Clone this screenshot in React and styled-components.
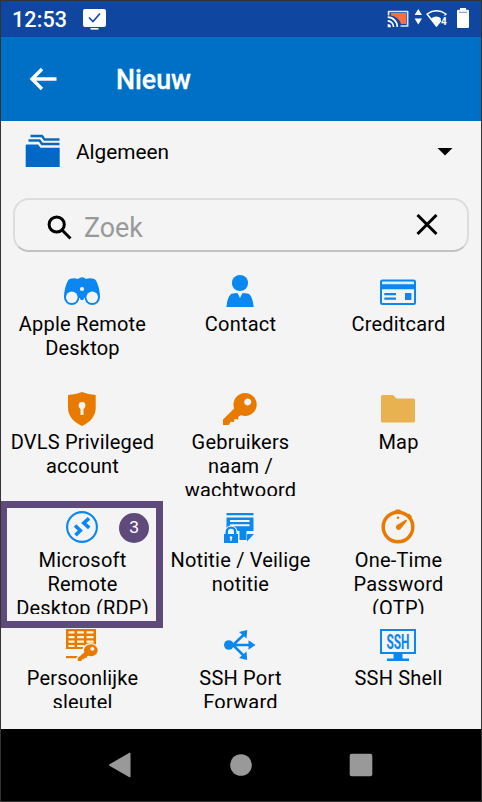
import React from "react";
import styled, { createGlobalStyle } from "styled-components";

const BLUE = "#0a87f0";
const ORANGE = "#e97a00";
const PAPER = "#f4f4f4";

const Global = createGlobalStyle`
  * { box-sizing: border-box; }
  body { margin: 0; background: #333; font-family: Roboto, "Noto Sans", sans-serif; color: #000; }
  svg { display: block; flex: none; }
`;

const Screen = styled.main`
  width: 482px;
  height: 802px;
  border: 1px solid #333;
  background: ${PAPER};
  display: flex;
  flex-direction: column;
  overflow: hidden;
`;

const StatusBar = styled.div`
  height: 36px;
  flex: none;
  padding: 0 11px;
  display: flex;
  align-items: center;
  background: #0f469f;
  color: #fff;
`;

const Clock = styled.time`
  width: 70px;
  font-size: 21.5px;
  font-weight: 500;
  line-height: 36px;
  letter-spacing: 0.1px;
  padding-top: 1px;
`;

const StatusIcons = styled.div`
  display: flex;
  margin-left: auto;
`;

const AppBar = styled.header`
  height: 84px;
  flex: none;
  display: flex;
  align-items: center;
  padding-left: 28px;
  background: #006fc6;
  color: #fff;
`;

const Title = styled.h1`
  margin: 0 0 0 59px;
  font-size: 26.8px;
  font-weight: 500;
  line-height: 32px;
  padding-top: 1px;
  -webkit-text-stroke: 0.3px #fff;
`;

const Category = styled.div`
  height: 77px;
  flex: none;
  display: flex;
  align-items: flex-start;
  padding: 13px 28px 0 24px;
`;

const CategoryName = styled.span`
  margin: 5px auto 0 15px;
  font-size: 20.8px;
  line-height: 26px;
`;

const Arrow = styled.svg`
  margin-top: 13px;
`;

const SearchBox = styled.div`
  height: 54px;
  flex: none;
  margin: 0 12px;
  padding: 0 29px 0 32px;
  display: flex;
  align-items: center;
  border: 2px solid #dcdcdc;
  border-bottom-color: #c2c2c2;
  border-radius: 16px;
`;

const SearchGlyph = styled.svg`
  margin-top: 4px;
`;

const Placeholder = styled.span`
  margin: 5px auto 0 12px;
  font-size: 26.8px;
  line-height: 32px;
  color: #999;
`;

const EntryGrid = styled.section`
  height: 436px;
  flex: none;
  margin: 20px 2px 0;
  display: grid;
  grid-template-columns: repeat(3, 158px);
  grid-auto-rows: 118px;
  overflow: hidden;
`;

const Entry = styled.div`
  display: flex;
  flex-direction: column;
  align-items: center;
`;

const Label = styled.div`
  width: 156px;
  height: 66px;
  overflow: hidden;
  padding-left: 1px;
  text-align: center;
  white-space: pre-line;
  font-size: 20px;
  line-height: 24px;
  letter-spacing: 0.2px;
`;

const GridArea = styled.div`
  position: relative;
`;

const Highlight = styled.div`
  position: absolute;
  left: -1px;
  top: 249px;
  width: 163px;
  height: 127px;
  border: 7px solid #5f4b7b;
`;

const StepBadge = styled.div`
  position: absolute;
  right: 7px;
  top: 5px;
  width: 30px;
  height: 30px;
  border-radius: 50%;
  background: #5f4b7b;
  color: #fff;
  font-family: "Liberation Sans", Arial, sans-serif;
  font-size: 17px;
  line-height: 30px;
  text-align: center;
`;

const NavBar = styled.nav`
  height: 72px;
  flex: none;
  margin-top: auto;
  background: #000;
  display: flex;
  justify-content: center;
  align-items: center;
  gap: 96px;
`;

const Icon = ({ children, color = BLUE }) => (
  <svg width="40" height="40" viewBox="0 0 40 40" fill={color}>
    {children}
  </svg>
);

const Binoculars = () => (
  <Icon>
    <path d="M2 26C2 19 3.500 13 6 8.500C7.500 6 13 5.500 16 7L17.500 6Q20 4.500 22.500 6L24 7C27 5.500 32.500 6 34 8.500C36.500 13 38 19 38 26Z" />
    <circle cx="9.800" cy="25.300" r="7.800" />
    <circle cx="30.200" cy="25.300" r="7.800" />
    <path d="M16.500 29.500L17.500 26h5L23.500 29.500V34h-7z" fill={PAPER} />
    <path d="M18 20h4v4c0 2 0 3-.7 4h-2.600c-.7-1-.7-2-.7-4z" />
    <circle cx="9.800" cy="25.300" r="5.800" fill={PAPER} />
    <circle cx="30.200" cy="25.300" r="5.800" fill={PAPER} />
    <circle cx="20" cy="17" r="2.100" fill={PAPER} />
  </Icon>
);

const Contact = () => (
  <Icon>
    <circle cx="20" cy="11" r="8.100" />
    <path d="M6.500 35C7 29 8 25 10.500 22.500Q12 21 17.500 21L20 26 22.500 21Q28 21 29.700 22.500C32 25 33 29 33.700 35Z" />
  </Icon>
);

const CreditCard = () => (
  <Icon>
    <rect x="3" y="8.500" width="34" height="23.500" rx="1.500" fill="#d5f3ff" stroke={BLUE} strokeWidth="2" />
    <path d="M4 17h32v14H4z" fill={PAPER} />
    <path d="M3 12.300h34v5H3z M6.300 21h11.700v2.200H6.300z M6.300 25.600h11.700v2.200H6.300z M27 21h6.400v7H27z" />
  </Icon>
);

const Shield = () => (
  <Icon color={ORANGE}>
    <path d="M6 5Q14 4.500 20 2Q26 4.500 33.700 5V18C33.700 26 28 32.500 20 36C12 32.500 6 26 6 18Z" />
    <circle cx="20" cy="15.500" r="3.400" fill={PAPER} />
    <path d="M18.500 17h3v8h-3z" fill={PAPER} />
  </Icon>
);

const KeyShape = () => (
  <path
    fillRule="evenodd"
    d="M25.300 3A11.500 11.500 0 1 1 21 25.200L18.600 26.400 18 29.500 14.500 29 14 32 10.500 31.700 9 35H3V29.500L14.200 18.500A11.500 11.500 0 0 1 25.300 3ZM27.700 8.400a3.500 3.500 0 1 0 .01 0Z"
  />
);

const Key = () => (
  <Icon color={ORANGE}>
    <KeyShape />
  </Icon>
);

const Folder = () => (
  <Icon color="#e9b251">
    <path d="M4.500 5H15L18.500 8.500H35.500Q37 8.500 37 10V31Q37 32.500 35.500 32.500H4.500Q3 32.500 3 31V6.500Q3 5 4.500 5Z" />
  </Icon>
);

const RemoteDesktop = () => (
  <Icon>
    <circle cx="20" cy="19" r="14.900" fill="none" stroke={BLUE} strokeWidth="2.100" />
    <path
      d="M13 17.500 18.300 22.500 13.500 27.300 M27 10.300 21.800 15 27.200 19.800"
      fill="none"
      stroke={BLUE}
      strokeWidth="3.600"
    />
  </Icon>
);

const SecureNote = () => (
  <Icon>
    <path d="M6.500 5h27v2.300h-27z M6.500 9.500h27V23h-7v9h-7V23h-2Q16 18 11 18q-3 0-4.500 2z" />
    <path d="M10 12h19.500v2H10z M10 16.300h19.500v2H10z" fill={PAPER} />
    <path d="M27 33.500V27q0-1 1-1h6z" />
    <path d="M3.500 26H5v-2a6 6 0 0 1 12 0v2h1.500v9h-15z" stroke={PAPER} strokeWidth="1" />
    <path d="M8 26v-2.200a3 3 0 0 1 6 0V26z" fill={PAPER} />
    <path d="M4 26h14v9H4z" />
    <circle cx="11" cy="29.500" r="1.300" fill={PAPER} />
    <path d="M10.300 30h1.400v3h-1.400z" fill={PAPER} />
  </Icon>
);

const Timer = () => (
  <Icon color={ORANGE}>
    <circle cx="20" cy="19" r="14.800" fill="none" stroke={ORANGE} strokeWidth="3.500" />
    <path d="M16.500 3.500 18 1.500h4l1.500 2z M29 7l2-1.500 3 3-1.500 2z M28 11.500 29.200 12.700 23 20.500A2.700 2.700 0 1 1 19.200 16.900Z" />
    <circle cx="20" cy="9.800" r="1.300" />
  </Icon>
);

const PrivateKey = () => (
  <Icon color={ORANGE}>
    <path d="M4 3h30v19H4z M4 19h18v4H4z M4 30h12v2.300H4z" />
    <path
      d="M6.500 5.300h6v2.200h-6z M15 5.300h7v2.200h-7z M24.500 5.300h7v2.200h-7z M6.500 10h6v2.200h-6z M15 10h7v2.200h-7z M24.500 10h7v2.200h-7z M6.500 14.500h6v2.200h-6z M15 14.500h7v2.200h-7z M24.500 14.500h7v2.200h-7z M6.500 19h6v2h-6z M15 19h7v2h-7z"
      fill="#fff4dd"
    />
    <g transform="translate(14 16.700) scale(.59 .52)">
      <g stroke={PAPER} strokeWidth="5" strokeLinejoin="round"><KeyShape /></g>
      <KeyShape />
    </g>
  </Icon>
);

const PortForward = () => (
  <Icon>
    <circle cx="8.800" cy="19" r="4.800" />
    <path d="M10 19H30 M13 19 25 7.500 M13 19 25 31" fill="none" stroke={BLUE} strokeWidth="2.500" />
    <path d="M28.500 14.200 35.500 19 28.500 23.800Z M19 6 27.200 4 26.500 12.500Z M19 32 27.200 34 26.500 25.500Z" />
  </Icon>
);

const SshShell = () => (
  <Icon>
    <rect x="3" y="4" width="34" height="23" fill="none" stroke={BLUE} strokeWidth="2" />
    <path d="M15.500 28h9v4.500H31V35H9v-2.500h6.500z" />
    <text
      x="8.500"
      y="23"
      fontFamily="Roboto, sans-serif"
      fontSize="21"
      fontWeight="700"
      textLength="23"
      lengthAdjust="spacingAndGlyphs"
    >
      SSH
    </text>
  </Icon>
);

const entries = [
  { label: "Apple Remote\nDesktop", Glyph: Binoculars },
  { label: "Contact", Glyph: Contact },
  { label: "Creditcard", Glyph: CreditCard },
  { label: "DVLS Privileged\naccount", Glyph: Shield },
  { label: "Gebruikers\nnaam /\nwachtwoord", Glyph: Key },
  { label: "Map", Glyph: Folder },
  { label: "Microsoft\nRemote\nDesktop (RDP)", Glyph: RemoteDesktop },
  { label: "Notitie / Veilige\nnotitie", Glyph: SecureNote },
  { label: "One-Time\nPassword\n(OTP)", Glyph: Timer },
  { label: "Persoonlijke\nsleutel", Glyph: PrivateKey },
  { label: "SSH Port\nForward", Glyph: PortForward },
  { label: "SSH Shell", Glyph: SshShell },
];

const MonitorCheck = () => (
  <svg width="25" height="22" viewBox="0 0 25 22">
    <rect x="1" y="1" width="23" height="18" rx="2" fill="#fff" />
    <path d="M7 9.500 11 13.500 18 5.500" fill="none" stroke="#0f469f" strokeWidth="1.600" />
    <path d="M8.500 20h8v1.600h-8z" fill="#fff" />
  </svg>
);

const SystemIcons = () => (
  <svg width="84" height="24" viewBox="386 7 84 24">
    <path d="M391 13h15v11h-5Q399 17 391 15.500z" fill="#fb6d42" />
    <path d="M388.600 15.500V11.500H407.600V26H400.500" fill="none" stroke="#dfe8f8" strokeWidth="1.700" strokeLinejoin="round" />
    <path d="M387.700 17.200A9.600 9.600 0 0 1 397.300 27 M387.700 20.900A6 6 0 0 1 393.600 27" fill="none" stroke="#fff" strokeWidth="1.700" />
    <path d="M387.700 24a3.200 3.200 0 0 1 3.200 3.200h-3.200z" fill="#fff" />
    <path d="M418.300 9 422 15h-7.400z M418.300 24.500 422 18.500h-7.400z" fill="#fff" />
    <path d="M427 14Q436.500 7.500 446 14L436.500 26z" fill="none" stroke="#fff" strokeWidth="1.500" strokeLinejoin="round" />
    <path d="M431 18.500Q436.500 14.500 441 18.500L436.500 27z" fill="#fff" />
    <path d="M441 15.500h7v10h-7z" fill="#0f469f" />
    <text x="441" y="24.700" fontFamily="Roboto, sans-serif" fontWeight="700" fontSize="10" fill="#fff">4</text>
    <path d="M460 8h6v1.800h2.200Q469 9.800 469 11V27Q469 28 468 28H458Q457 28 457 27V11Q457 9.800 458 9.800H460z" fill="#fff" />
    <path d="M459 12.300h8" stroke="#6d8fc6" strokeWidth="1" />
  </svg>
);

export default function App() {
  return (
    <>
      <Global />
      <Screen>
        <StatusBar>
          <Clock>12:53</Clock>
          <MonitorCheck />
          <StatusIcons>
            <SystemIcons />
          </StatusIcons>
        </StatusBar>
        <AppBar>
          <svg width="28" height="24" viewBox="0 0 28 24" fill="none" stroke="#fff" strokeWidth="3.400">
            <path d="M13 2 3 12 13 22M3 12H27.500" />
          </svg>
          <Title>Nieuw</Title>
        </AppBar>
        <Category>
          <svg width="36" height="34" viewBox="0 0 36 34">
            <path d="M5.500 2H17L19.500 5.500H34.500 M3.500 6.500H14.500L17 10H34.500" fill="none" stroke="#0d69b8" strokeWidth="2.300" />
            <path d="M1.700 10.500H13L15.500 13.800H34.700V33H.7V11.500Q.7 10.500 1.700 10.500Z" fill="#0068c6" />
          </svg>
          <CategoryName>Algemeen</CategoryName>
          <Arrow width="16" height="9" viewBox="0 0 16 9">
            <path d="M.5 1H15.500L8 8.500Z" />
          </Arrow>
        </Category>
        <SearchBox>
          <SearchGlyph width="25" height="25" viewBox="0 0 25 25" fill="none" stroke="#000" strokeWidth="3">
            <circle cx="9.700" cy="9.500" r="7.600" />
            <path d="M15 15 23.500 23.500" />
          </SearchGlyph>
          <Placeholder>Zoek</Placeholder>
          <svg width="22" height="22" viewBox="0 0 22 22" fill="none" stroke="#000" strokeWidth="3">
            <path d="M1.500 1 20.500 20M20.500 1 1.500 20" />
          </svg>
        </SearchBox>
        <GridArea>
          <EntryGrid>
            {entries.map(({ label, Glyph }) => (
              <Entry key={label}>
                <Glyph />
                <Label>{label}</Label>
              </Entry>
            ))}
          </EntryGrid>
          <Highlight>
            <StepBadge>3</StepBadge>
          </Highlight>
        </GridArea>
        <NavBar>
          <svg width="24" height="26" viewBox="0 0 24 26">
            <path d="M.8 13 20.800 1.500V24.500Z" fill="#999" stroke="#999" strokeWidth="1.500" strokeLinejoin="round" />
          </svg>
          <svg width="24" height="24" viewBox="0 0 24 24">
            <circle cx="12" cy="12" r="10.800" fill="#999" />
          </svg>
          <svg width="24" height="24" viewBox="0 0 24 24">
            <rect x=".7" y=".7" width="22.600" height="22.600" rx="2" fill="#999" />
          </svg>
        </NavBar>
      </Screen>
    </>
  );
}
